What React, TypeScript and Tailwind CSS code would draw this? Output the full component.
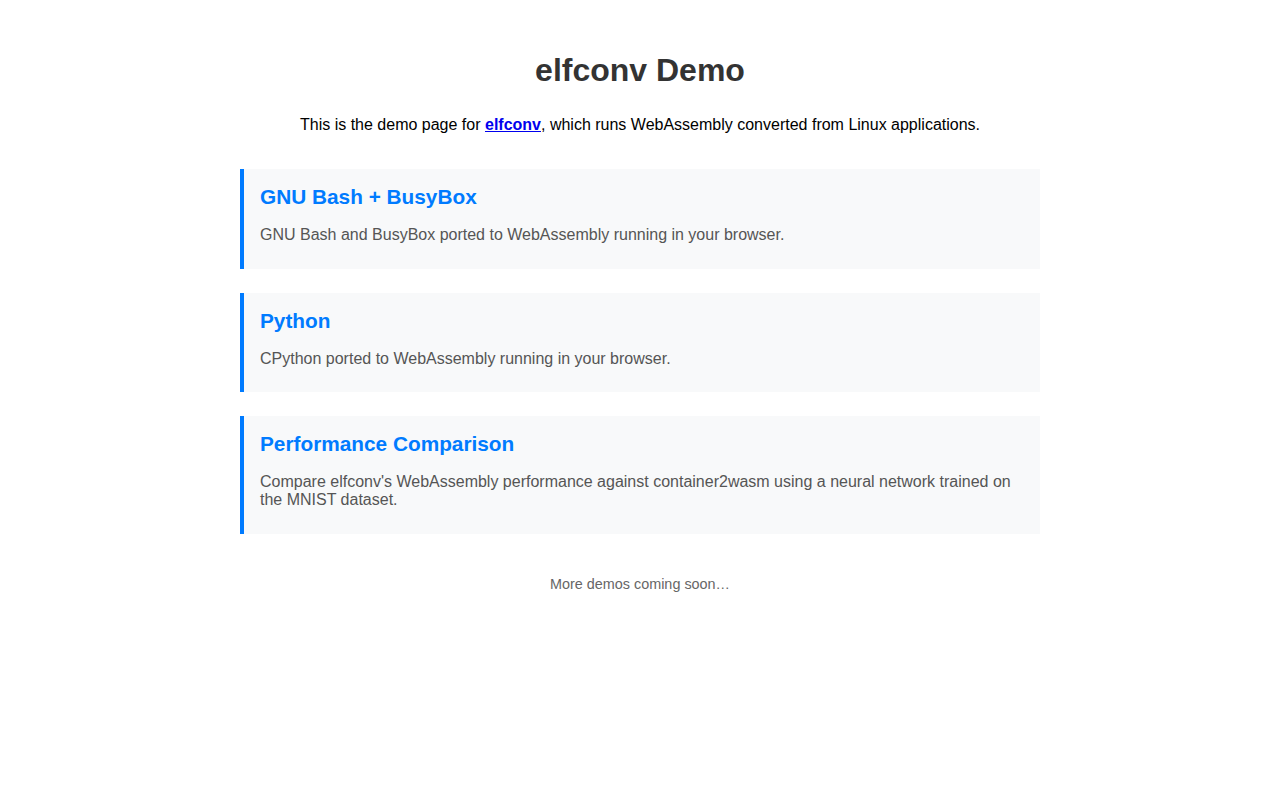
const demos = [
  {
    title: "GNU Bash + BusyBox",
    desc: "GNU Bash and BusyBox ported to WebAssembly running in your browser.",
  },
  {
    title: "Python",
    desc: "CPython ported to WebAssembly running in your browser.",
  },
  {
    title: "Performance Comparison",
    desc: "Compare elfconv's WebAssembly performance against container2wasm using a neural network trained on the MNIST dataset.",
  },
];

function DemoCard({ title, desc }: { title: string; desc: string }) {
  return (
    <a
      href="#"
      className="block border-l-4 border-[#007bff] bg-[#f8f9fa] px-4 pt-[16px] pb-[24.5px]"
    >
      <h2 className="text-[20.8px] leading-[24px] font-bold text-[#007bff]">{title}</h2>
      <p className="mt-[17px] text-[16px] leading-[18px] text-[#555]">{desc}</p>
    </a>
  );
}

export default function App() {
  return (
    <div className="min-h-screen bg-white font-['Liberation_Sans',Arial,sans-serif]">
      <div className="mx-auto w-[800px] pt-[52px]">
        <h1 className="text-center text-[32px] leading-[37px] font-bold text-[#333]">
          elfconv Demo
        </h1>
        <p className="mt-[27px] text-center text-[16px] leading-[18px] text-black">
          This is the demo page for{" "}
          <a href="#" className="font-bold text-[#0000ee] underline">
            elfconv
          </a>
          , which runs WebAssembly converted from Linux applications.
        </p>
        <div className="mt-[35px] flex flex-col gap-6">
          {demos.map((d) => (
            <DemoCard key={d.title} title={d.title} desc={d.desc} />
          ))}
        </div>
        <p className="mt-[42px] text-center text-[14.4px] leading-[16.5px] text-[#666]">
          More demos coming soon…
        </p>
      </div>
    </div>
  );
}
